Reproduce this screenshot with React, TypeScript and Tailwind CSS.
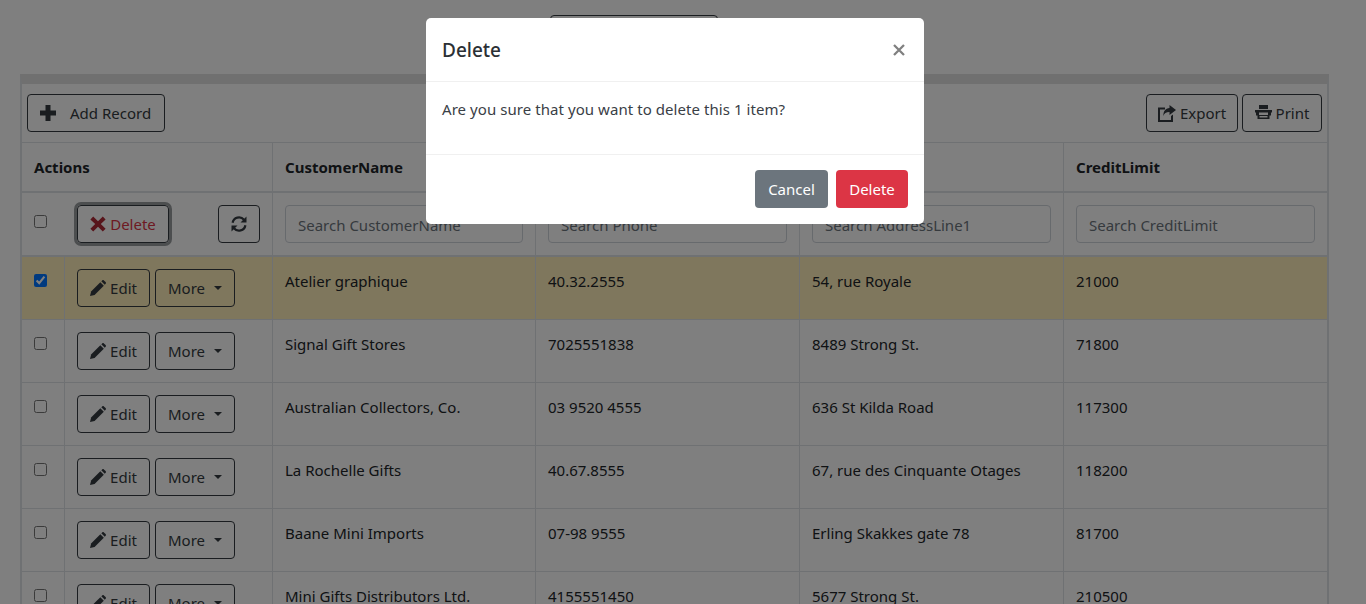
const rows = [
  { name: "Atelier graphique", phone: "40.32.2555", address: "54, rue Royale", credit: "21000", selected: true },
  { name: "Signal Gift Stores", phone: "7025551838", address: "8489 Strong St.", credit: "71800" },
  { name: "Australian Collectors, Co.", phone: "03 9520 4555", address: "636 St Kilda Road", credit: "117300" },
  { name: "La Rochelle Gifts", phone: "40.67.8555", address: "67, rue des Cinquante Otages", credit: "118200" },
  { name: "Baane Mini Imports", phone: "07-98 9555", address: "Erling Skakkes gate 78", credit: "81700" },
  { name: "Mini Gifts Distributors Ltd.", phone: "4155551450", address: "5677 Strong St.", credit: "210500" },
];

const btn = "flex h-[38px] items-center rounded border border-[#343a40] text-[#343a40]";

const PlusIcon = () => (
  <svg viewBox="0 0 16 16" className="size-[16px] shrink-0" fill="currentColor">
    <path d="M5.5 0h5v5.5H16v5h-5.500V16h-5v-5.500H0v-5h5.500z" />
  </svg>
);

const RemoveIcon = () => (
  <svg viewBox="0 0 16 16" className="size-[16px] shrink-0" fill="currentColor">
    <path d="M3.200.6 8 5.300 12.800.6 15.600 3.400 10.800 8l4.800 4.700-2.800 2.800L8 10.800l-4.800 4.700L.4 12.700 5.200 8 .4 3.400z" />
  </svg>
);

const PencilIcon = () => (
  <svg viewBox="0 0 16 16" className="size-[16px] shrink-0" fill="currentColor">
    <path d="M0 16l1.100-4.600L10.300 2.200l3.500 3.500-9.200 9.200z" />
    <path d="M11.300 1.200 12.200.4c.5-.5 1.200-.5 1.700 0l1.700 1.700c.5.500.5 1.200 0 1.700l-.8.9z" />
  </svg>
);

const RefreshIcon = () => (
  <svg viewBox="0 0 16 16" className="size-[16px]" fill="none" stroke="currentColor" strokeWidth="2.200">
    <path d="M1.600 6.800A6.500 6.500 0 0 1 13 3.700" />
    <path d="M14.400 9.200A6.500 6.500 0 0 1 3 12.300" />
    <path d="M15.500 0.600v6h-6z" fill="currentColor" stroke="none" />
    <path d="M.5 15.400v-6h6z" fill="currentColor" stroke="none" />
  </svg>
);

const ExportIcon = () => (
  <svg viewBox="0 0 18 17" className="h-[17px] w-[18px] shrink-0" fill="currentColor">
    <path d="M0 2.500h7v2H2V15h11v-4l2-1.500V17H0z" />
    <path d="M11.500 0 18 5l-6.500 5V7C8 7 6 8.500 5.500 11 5 6.500 7.500 3.500 11.500 3z" />
  </svg>
);

const PrintIcon = () => (
  <svg viewBox="0 0 17 16" className="h-[16px] w-[17px] shrink-0" fill="currentColor">
    <path d="M4 0h9v4H4z" />
    <path d="M0 5h17v2.500H0z" />
    <path d="M1 7h3v3h9V7h3v3.500h-1.500V14h-12v-3.500H1zM4.500 11v1.500h8V11z" fillRule="evenodd" />
  </svg>
);

function Cell({ children, w }: { children: React.ReactNode; w: string }) {
  return <div className={`${w} shrink-0 border-l border-[#dee2e6] px-3 pt-[13px]`}>{children}</div>;
}

function SearchBox({ label, w }: { label: string; w: string }) {
  return (
    <div className={`${w} shrink-0 border-l border-[#dee2e6] px-3 pt-3`}>
      <input
        placeholder={`Search ${label}`}
        className="h-[38px] w-full rounded border border-[#ced4da] bg-white px-3 pt-[2px] text-[#495057] placeholder:text-[#6c757d]"
      />
    </div>
  );
}

function Row({ row }: { row: (typeof rows)[number] }) {
  return (
    <div className={`flex h-[63px] shrink-0 border-b border-[#dee2e6] ${row.selected ? "bg-[#ffeeba]" : ""}`}>
      <div className="w-[42px] shrink-0 pl-3 pt-[17px]">
        <input type="checkbox" defaultChecked={row.selected} className="block h-[13px] w-[13px]" />
      </div>
      <div className="flex w-[208px] shrink-0 gap-[5px] border-l border-[#dee2e6] pl-3 pt-3">
        <button className={`${btn} w-[73px] justify-center gap-[4px]`}>
          <PencilIcon />
          Edit
        </button>
        <button className={`${btn} w-[80px] justify-center gap-[9px]`}>
          More
          <span className="border-x-[4.8px] border-t-[4.8px] border-x-transparent border-t-[#343a40]" />
        </button>
      </div>
      <Cell w="w-[263px]">{row.name}</Cell>
      <Cell w="w-[264px]">{row.phone}</Cell>
      <Cell w="w-[264px]">{row.address}</Cell>
      <Cell w="w-[264px]">{row.credit}</Cell>
    </div>
  );
}

export default function App() {
  return (
    <div className="relative h-[604px] overflow-hidden bg-white font-['Noto_Sans','Open_Sans',sans-serif] text-[15px] text-[#212529]">
      <div className="flex pl-[550px] pt-[15px]">
        <button className="h-[38px] w-[168px] rounded border border-[#343a40]" />
      </div>

      <div className="ml-[20px] mt-[21px] w-[1309px] border-x-2 border-t-[10px] border-x-[#dee2e6] border-t-[#e0e0e0]">
        <div className="flex h-[59px] items-start justify-between border-b border-[#dee2e6] px-[5px] pt-[10px]">
          <button className={`${btn} w-[138px] gap-[14px] pl-3`}>
            <PlusIcon />
            Add Record
          </button>
          <div className="flex gap-1">
            <button className={`${btn} w-[92px] justify-center gap-[4px]`}>
              <ExportIcon />
              Export
            </button>
            <button className={`${btn} w-[80px] justify-center gap-[4px]`}>
              <PrintIcon />
              Print
            </button>
          </div>
        </div>

        <div className="flex h-[50px] border-b-2 border-[#dee2e6] font-bold">
          <div className="w-[250px] shrink-0 px-3 pt-[13px]">Actions</div>
          <Cell w="w-[263px]">CustomerName</Cell>
          <Cell w="w-[264px]">Phone</Cell>
          <Cell w="w-[264px]">AddressLine1</Cell>
          <Cell w="w-[264px]">CreditLimit</Cell>
        </div>

        <div className="flex h-[64px] border-b-2 border-[#dee2e6]">
          <div className="flex w-[250px] shrink-0 items-start px-3 pt-3">
            <input type="checkbox" className="mt-[10px] block h-[13px] w-[13px]" />
            <button className={`${btn} ml-[30px] w-[92px] justify-center gap-[4px] text-[#dc3545] shadow-[0_0_0_3px_rgba(52,58,64,0.5)]`}>
              <span className="text-[#b02a37]">
                <RemoveIcon />
              </span>
              Delete
            </button>
            <button className={`${btn} ml-[49px] w-[42px] justify-center`}>
              <RefreshIcon />
            </button>
          </div>
          <SearchBox label="CustomerName" w="w-[263px]" />
          <SearchBox label="Phone" w="w-[264px]" />
          <SearchBox label="AddressLine1" w="w-[264px]" />
          <SearchBox label="CreditLimit" w="w-[264px]" />
        </div>

        {rows.map((row) => (
          <Row key={row.name} row={row} />
        ))}
      </div>

      {/* modal backdrop and dialog */}
      <div className="absolute inset-0 bg-black/50" />
      <div className="absolute left-[426px] top-[18px] w-[498px] rounded-[5px] bg-white">
        <div className="flex h-[64px] items-center justify-between border-b border-[#f0f0f0] pl-4 pr-[19px]">
          <h5 className="pt-[1px] text-[19px] font-medium leading-none text-[#2b3035]">Delete</h5>
          <svg viewBox="0 0 12 12" className="size-[12px] text-[#808080]" fill="none" stroke="currentColor" strokeWidth="2.300">
            <path d="M1 1l10 10M11 1 1 11" />
          </svg>
        </div>
        <div className="h-[73px] border-b border-[#f0f0f0] pl-4 pt-[16px] tracking-[0.06px] text-[#3a4046]">
          Are you sure that you want to delete this 1 item?
        </div>
        <div className="flex h-[69px] justify-end gap-2 pr-4 pt-[15px]">
          <button className="h-[38px] w-[73px] rounded bg-[#6c757d] text-white">Cancel</button>
          <button className="h-[38px] w-[72px] rounded bg-[#dc3545] text-white">Delete</button>
        </div>
      </div>
    </div>
  );
}
